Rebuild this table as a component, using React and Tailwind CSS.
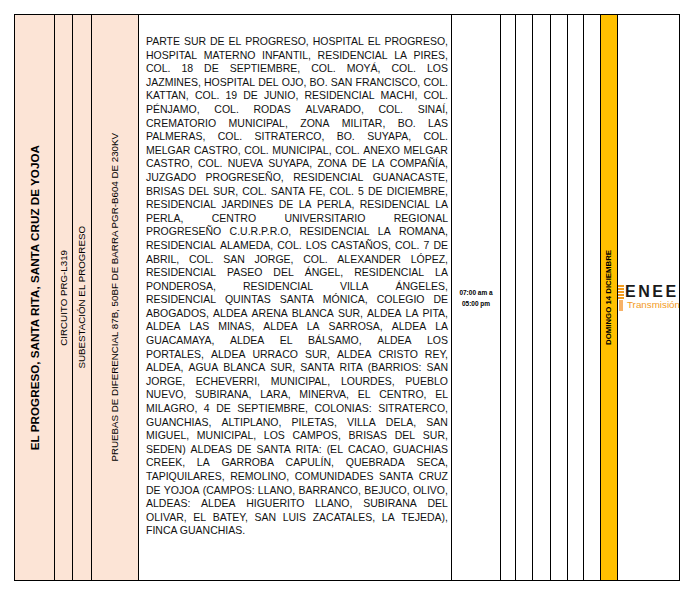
const lines = [
  "PARTE SUR DE EL PROGRESO, HOSPITAL EL PROGRESO,",
  "HOSPITAL MATERNO INFANTIL, RESIDENCIAL LA PIRES,",
  "COL. 18 DE SEPTIEMBRE, COL. MOYÁ, COL. LOS",
  "JAZMINES, HOSPITAL DEL OJO, BO. SAN FRANCISCO, COL.",
  "KATTAN, COL. 19 DE JUNIO, RESIDENCIAL MACHI, COL.",
  "PÉNJAMO, COL. RODAS ALVARADO, COL. SINAÍ,",
  "CREMATORIO MUNICIPAL, ZONA MILITAR, BO. LAS",
  "PALMERAS, COL. SITRATERCO, BO. SUYAPA, COL.",
  "MELGAR CASTRO, COL. MUNICIPAL, COL. ANEXO MELGAR",
  "CASTRO, COL. NUEVA SUYAPA, ZONA DE LA COMPAÑÍA,",
  "JUZGADO PROGRESEÑO, RESIDENCIAL GUANACASTE,",
  "BRISAS DEL SUR, COL. SANTA FE, COL. 5 DE DICIEMBRE,",
  "RESIDENCIAL JARDINES DE LA PERLA, RESIDENCIAL LA",
  "PERLA, CENTRO UNIVERSITARIO REGIONAL",
  "PROGRESEÑO C.U.R.P.R.O, RESIDENCIAL LA ROMANA,",
  "RESIDENCIAL ALAMEDA, COL. LOS CASTAÑOS, COL. 7 DE",
  "ABRIL, COL. SAN JORGE, COL. ALEXANDER LÓPEZ,",
  "RESIDENCIAL PASEO DEL ÁNGEL, RESIDENCIAL LA",
  "PONDEROSA, RESIDENCIAL VILLA ÁNGELES,",
  "RESIDENCIAL QUINTAS SANTA MÓNICA, COLEGIO DE",
  "ABOGADOS, ALDEA ARENA BLANCA SUR, ALDEA LA PITA,",
  "ALDEA LAS MINAS, ALDEA LA SARROSA, ALDEA LA",
  "GUACAMAYA, ALDEA EL BÁLSAMO, ALDEA LOS",
  "PORTALES, ALDEA URRACO SUR, ALDEA CRISTO REY,",
  "ALDEA, AGUA BLANCA SUR, SANTA RITA (BARRIOS: SAN",
  "JORGE, ECHEVERRI, MUNICIPAL, LOURDES, PUEBLO",
  "NUEVO, SUBIRANA, LARA, MINERVA, EL CENTRO, EL",
  "MILAGRO, 4 DE SEPTIEMBRE, COLONIAS: SITRATERCO,",
  "GUANCHIAS, ALTIPLANO, PILETAS, VILLA DELA, SAN",
  "MIGUEL, MUNICIPAL, LOS CAMPOS, BRISAS DEL SUR,",
  "SEDEN) ALDEAS DE SANTA RITA: (EL CACAO, GUACHIAS",
  "CREEK, LA GARROBA CAPULÍN, QUEBRADA SECA,",
  "TAPIQUILARES, REMOLINO, COMUNIDADES SANTA CRUZ",
  "DE YOJOA (CAMPOS: LLANO, BARRANCO, BEJUCO, OLIVO,",
  "ALDEAS: ALDEA HIGUERITO LLANO, SUBIRANA DEL",
  "OLIVAR, EL BATEY, SAN LUIS ZACATALES, LA TEJEDA),",
  "FINCA GUANCHIAS.",
];

function Empty({ w }) {
  return <div className={`${w} shrink-0 border-r border-black`} />;
}

export default function App() {
  return (
    <div className="w-[696px] h-[593px] bg-white pt-[14px] pl-[14px] font-['Liberation_Sans',Arial,sans-serif] text-black">
      <div className="flex w-[666px] h-[567px] border border-black">
        <div className="w-[40px] shrink-0 border-r border-black bg-[#fce4d6] flex items-center justify-center">
          <span className="[writing-mode:vertical-rl] rotate-180 font-bold text-[11.7px] leading-none whitespace-nowrap">
            EL PROGRESO, SANTA RITA, SANTA CRUZ DE YOJOA
          </span>
        </div>
        <div className="w-[18px] shrink-0 border-r border-black bg-[#fce4d6] flex items-center justify-center">
          <span className="[writing-mode:vertical-rl] rotate-180 text-[9.75px] leading-none whitespace-nowrap">
            CIRCUITO PRG-L319
          </span>
        </div>
        <div className="w-[19px] shrink-0 border-r border-black bg-[#fce4d6] flex items-center justify-center">
          <span className="[writing-mode:vertical-rl] rotate-180 text-[9.75px] leading-none whitespace-nowrap">
            SUBESTACIÓN EL PROGRESO
          </span>
        </div>
        <div className="w-[47px] shrink-0 border-r border-black bg-[#fce4d6] flex items-center justify-center">
          <span className="[writing-mode:vertical-rl] rotate-180 text-[9.75px] leading-none whitespace-nowrap">
            PRUEBAS DE DIFERENCIAL 87B, 50BF DE BARRA PGR-B604 DE 230KV
          </span>
        </div>
        <div className="w-[313px] shrink-0 border-r border-black pl-[7px] pr-[3px] pt-[20px] text-[10.5px] leading-[13.6px] text-[#111]">
          {lines.map((l, i) =>
            i === lines.length - 1 ? (
              <div key={i} className="whitespace-nowrap">{l}</div>
            ) : (
              <div key={i} className="flex justify-between whitespace-nowrap">
                {l.split(" ").map((w, j) => (
                  <span key={j}>{w}</span>
                ))}
              </div>
            )
          )}
        </div>
        <div className="w-[49px] shrink-0 border-r border-black flex items-center justify-center">
          <div className="text-center font-bold text-[6.5px] leading-[11px]">
            <div>07:00 am a</div>
            <div>05:00 pm</div>
          </div>
        </div>
        <Empty w="w-[15px]" />
        <Empty w="w-[17px]" />
        <Empty w="w-[18px]" />
        <Empty w="w-[17px]" />
        <Empty w="w-[16px]" />
        <Empty w="w-[17px]" />
        <div className="w-[17px] shrink-0 border-r border-black bg-[#ffc000] flex items-center justify-center">
          <span className="[writing-mode:vertical-rl] rotate-180 font-bold text-[7.8px] leading-none whitespace-nowrap">
            DOMINGO 14 DICIEMBRE
          </span>
        </div>
        <div className="w-[61px] shrink-0 flex items-center overflow-hidden">
          <div className="flex items-center">
            <svg width="6" height="26" viewBox="0 0 6 26" className="shrink-0">
              <rect x="0" y="0" width="6" height="2" fill="#f39c1f" />
              <rect x="0" y="3" width="6" height="2" fill="#f39c1f" />
              <rect x="0" y="6" width="6" height="2" fill="#f39c1f" />
              <rect x="0" y="9" width="6" height="2" fill="#f39c1f" />
              <rect x="0" y="12" width="6" height="2" fill="#f39c1f" />
              <rect x="1" y="15" width="4" height="11" fill="#f7b267" />
            </svg>
            <div className="ml-[1px] flex flex-col">
              <span className="font-bold text-[16px] leading-[14px] tracking-[2.5px] text-[#1a1a1a] whitespace-nowrap">ENEE</span>
              <span className="text-[9.8px] leading-[11px] text-[#f39c1f] whitespace-nowrap ml-[2px]">Transmisión</span>
            </div>
          </div>
        </div>
      </div>
    </div>
  );
}
